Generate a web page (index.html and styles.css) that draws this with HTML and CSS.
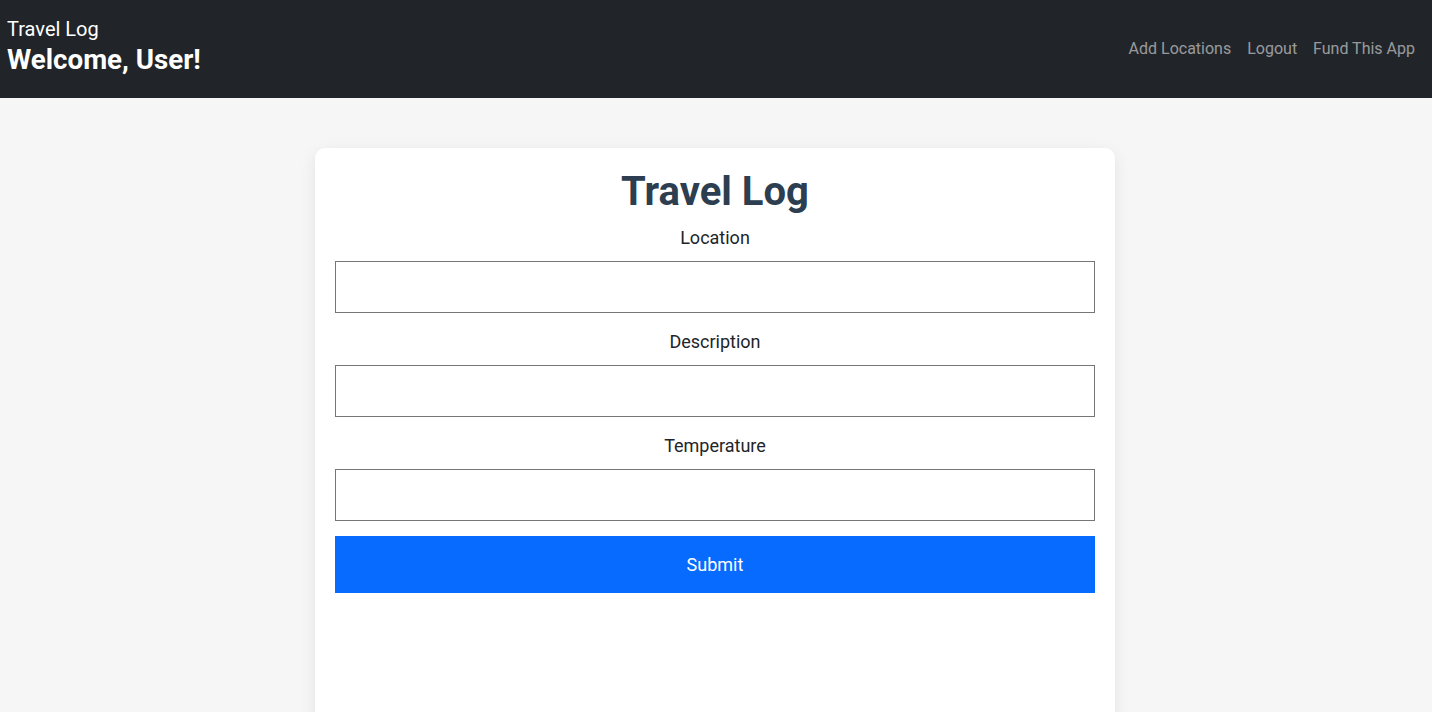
FILE: index.html
```html
<!DOCTYPE html>
<html lang="en">
<head>
<meta charset="utf-8">
<title>Travel Log</title>
<link rel="stylesheet" href="styles.css">
</head>
<body>
<header class="navbar">
  <div class="brand">
    <div class="brand-name">Travel Log</div>
    <h3 class="welcome">Welcome, User!</h3>
  </div>
  <nav class="nav-links">
    <a href="#" class="nav-link">Add Locations</a>
    <a href="#" class="nav-link">Logout</a>
    <a href="#" class="nav-link">Fund This App</a>
  </nav>
</header>
<main class="page">
  <section class="card">
    <h1 class="card-title">Travel Log</h1>
    <form class="log-form">
      <label class="field-label" for="loc">Location</label>
      <input class="field-input" id="loc" type="text">
      <label class="field-label" for="desc">Description</label>
      <input class="field-input" id="desc" type="text">
      <label class="field-label" for="temp">Temperature</label>
      <input class="field-input" id="temp" type="text">
      <button class="submit-btn" type="button">Submit</button>
    </form>
  </section>
</main>
</body>
</html>
```
FILE: styles.css
```css
* { box-sizing: border-box; }
html, body { margin: 0; padding: 0; }
body {
  font-family: Roboto, "Liberation Sans", sans-serif;
  background: #f6f6f6;
  color: #212529;
  height: 712px;
  overflow: hidden;
}
.navbar {
  background: #212529;
  height: 98px;
  display: flex;
  align-items: center;
  justify-content: space-between;
  padding: 0 17px 0 7px;
}
.brand { display: flex; flex-direction: column; color: #fff; margin-top: -4px; }
.brand-name { font-size: 20px; line-height: 24px; }
.welcome { margin: 2px 0 0; font-size: 27.7px; line-height: 34px; font-weight: 700; }
.nav-links { display: flex; gap: 16px; }
.nav-link { color: rgba(255,255,255,0.55); text-decoration: none; font-size: 16px; line-height: 24px; }
.page { display: flex; justify-content: center; padding: 50px 2px 0 0; height: 614px; overflow: hidden; }
.card {
  flex: none;
  width: 800px;
  height: 600px;
  background: #fff;
  border-radius: 10px;
  box-shadow: 0 4px 16px rgba(0,0,0,0.08);
  padding: 20px 20px;
}
.card-title {
  margin: 0;
  text-align: center;
  font-size: 40px;
  line-height: 48px;
  font-weight: 700;
  color: #2c3e50;
}
.log-form { display: flex; flex-direction: column; }
.field-label {
  text-align: center;
  font-size: 18px;
  line-height: 24px;
  margin-top: 17px;
  margin-bottom: 11px;
}
.field-label:first-child { margin-top: 10px; }
.field-input {
  height: 52px;
  border: 1px solid #767676;
  border-radius: 0;
  font-size: 16px;
  padding: 0 10px;
  background: #fff;
}
.submit-btn {
  margin-top: 15px;
  height: 57px;
  border: none;
  background: #076bff;
  color: #fff;
  font-family: inherit;
  font-size: 18px;
}
```
